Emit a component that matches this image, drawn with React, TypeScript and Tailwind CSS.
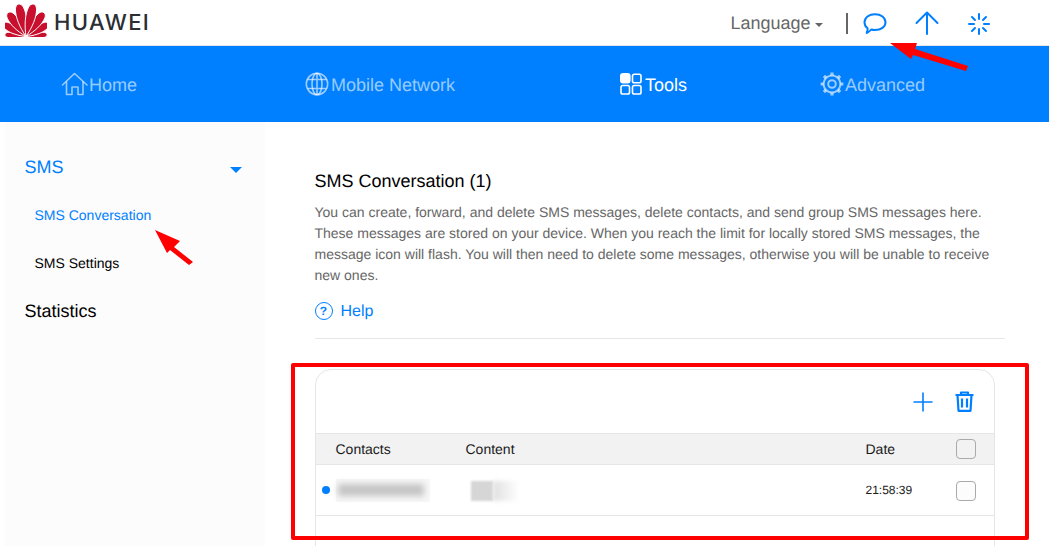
import React from 'react';

const Petal: React.FC<{ angle: number; len: number; width: number }> = ({ angle, len, width }) => (
  <path
    transform={`translate(21 33.5) rotate(${angle})`}
    d={`M0 0 C${-width * 0.7} ${-len * 0.3} ${-width * 1.05} ${-len * 0.62} ${-width * 0.7} ${-len * 0.85} C${-width * 0.45} ${-len} ${width * 0.45} ${-len} ${width * 0.7} ${-len * 0.85} C${width * 1.05} ${-len * 0.62} ${width * 0.7} ${-len * 0.3} 0 0 Z`}
    fill="#c8102e"
    stroke="#ffffff"
    strokeWidth="0.9"
  />
);

const HuaweiLogo = () => (
  <svg width="42" height="34" viewBox="0 0 42 34" className="shrink-0">
    <Petal angle={-85} len={22} width={3.5} />
    <Petal angle={85} len={22} width={3.5} />
    <Petal angle={-61} len={27} width={5} />
    <Petal angle={61} len={27} width={5} />
    <Petal angle={-37} len={31} width={5.5} />
    <Petal angle={37} len={31} width={5.5} />
    <Petal angle={-13} len={34.5} width={5.8} />
    <Petal angle={13} len={34.5} width={5.8} />
  </svg>
);

const HomeIcon = () => (
  <svg width="28" height="24" viewBox="0 0 28 24" fill="none" stroke="currentColor" strokeWidth="1.6" strokeLinejoin="round" strokeLinecap="round">
    <path d="M1.5 13 L13.5 1.5 L26 13" />
    <path d="M5.5 10 V22.5 H11 V15 H17 V22.5 H22 V10" />
  </svg>
);

const GlobeIcon = () => (
  <svg width="24" height="24" viewBox="0 0 24 24" fill="none" stroke="currentColor" strokeWidth="1.6">
    <circle cx="12" cy="12" r="10.7" />
    <ellipse cx="12" cy="12" rx="5" ry="10.7" />
    <path d="M12 1.3 V22.7 M2.4 7.5 H21.6 M2.4 16.5 H21.6" />
  </svg>
);

const ToolsIcon = () => (
  <svg width="22" height="22" viewBox="0 0 22 22" fill="none" stroke="currentColor" strokeWidth="1.6">
    <rect x="0.8" y="0.8" width="9" height="9" rx="2.2" fill="currentColor" />
    <rect x="12.5" y="1.2" width="8.5" height="8.5" rx="1.8" />
    <rect x="1" y="12.5" width="8.5" height="8.5" rx="1.8" />
    <rect x="12.5" y="12.5" width="8.5" height="8.5" rx="1.8" />
  </svg>
);

const GearIcon = () => (
  <svg width="24" height="24" viewBox="0 0 24 24" fill="none" stroke="currentColor" strokeWidth="2">
    <circle cx="12" cy="12" r="8.4" />
    <circle cx="12" cy="12" r="3.8" />
    <path
      strokeWidth="3.2"
      d="M12 0.6 V3.6 M12 20.4 V23.4 M0.6 12 H3.6 M20.4 12 H23.4 M3.9 3.9 L6 6 M18 18 L20.1 20.1 M3.9 20.1 L6 18 M18 6 L20.1 3.9"
    />
  </svg>
);

const NavItem: React.FC<{ label: string; icon: React.ReactNode; active?: boolean; width: string; gap: string }> = ({ label, icon, active, width, gap }) => (
  <div className={`flex items-center ${width} ${active ? 'text-white' : 'text-white/60'}`}>
    {icon}
    <span className={`mt-[2px] text-[18px] ${gap}`}>{label}</span>
  </div>
);

const Check = ({ fill, offset }: { fill: string; offset?: string }) => (
  <div className={`h-5 w-5 rounded-[4px] border border-[#aaaaaa] ${fill} ${offset ?? ''}`} />
);

export default function App() {
  return (
    <div className="relative h-[546px] w-[1049px] overflow-hidden bg-white font-['Liberation_Sans',Arial,sans-serif] [text-rendering:geometricPrecision]">
      {/* top bar */}
      <header className="flex h-[46px] items-start border-b border-[#e6e6e6] bg-white">
        <div className="ml-[5px] mt-[3px] flex items-center">
          <HuaweiLogo />
          <span className="ml-[7px] mt-[5px] w-[97px] overflow-hidden whitespace-nowrap font-['Inter',sans-serif] text-[22px] font-medium leading-[28px] tracking-[1.4px] text-[#2b2e33]">
            HUAWEI
          </span>
        </div>
        <div className="ml-[579.5px] flex h-[46px] items-center text-[#666666]">
          <span className="text-[18px]">Language</span>
          <span className="ml-[4px] mt-[3px] h-0 w-0 border-x-[4px] border-t-[4px] border-x-transparent border-t-[#666666]" />
          <span className="ml-[23.5px] h-[21px] w-[2px] bg-[#666666]" />
          <svg className="ml-[15px] mt-[1px]" width="24" height="22" viewBox="0 0 24 22" fill="none" stroke="#007fff" strokeWidth="2" strokeLinejoin="round">
            <path d="M12 1.2 C18 1.2 22.5 4.6 22.5 9.2 C22.5 13.8 18 17 12 17 C10.5 17 9.5 16.9 8.2 16.5 C7 18 5.5 19.3 3.7 20 C4.4 18.3 4.8 16.7 4.6 15.2 C2.6 13.8 1.5 11.7 1.5 9.2 C1.5 4.6 6 1.2 12 1.2 Z" />
          </svg>
          <svg className="ml-[28px]" width="24" height="24" viewBox="0 0 24 24" fill="none" stroke="#007fff" strokeWidth="2" strokeLinecap="round" strokeLinejoin="round">
            <path d="M1.5 12 L12 1.5 L22.5 12 M12 1.5 V23" />
          </svg>
          <svg className="ml-[29px] mt-[1px]" width="22" height="22" viewBox="0 0 22 22" fill="none" stroke="#007fff" strokeWidth="2" strokeLinecap="round">
            <path d="M11 1 V6 M11 16 V21 M1 11 H6 M16 11 H21 M4 4 L7 7 M15 15 L18 18 M4 18 L7 15 M15 7 L18 4" />
          </svg>
        </div>
      </header>

      {/* main nav */}
      <nav className="flex h-[76px] items-center bg-[#007fff] pl-[61px]">
        <NavItem label="Home" icon={<HomeIcon />} width="w-[244px]" gap="ml-0" />
        <NavItem label="Mobile Network" icon={<GlobeIcon />} width="w-[315px]" gap="ml-[2px]" />
        <NavItem label="Tools" icon={<ToolsIcon />} active width="w-[200px]" gap="ml-[3px]" />
        <NavItem label="Advanced" icon={<GearIcon />} width="w-[150px]" gap="ml-[1px]" />
      </nav>

      <div className="flex h-[424px]">
        {/* sidebar */}
        <aside className="ml-[5px] w-[260px] shrink-0 bg-[#fcfcfc] pt-[21px]">
          <div className="flex h-12 items-center justify-between pl-[19.5px] pr-[23px] text-[18px] text-[#007fff]">
            <span>SMS</span>
            <span className="mt-[5px] h-0 w-0 border-x-[6px] border-t-[6px] border-x-transparent border-t-[#007fff]" />
          </div>
          <div className="flex h-12 items-center pl-[29.5px] text-sm text-[#007fff]">SMS Conversation</div>
          <div className="flex h-12 items-center pl-[29.5px] text-sm text-black">SMS Settings</div>
          <div className="flex h-12 items-center pl-[19.5px] text-[18px] text-black">Statistics</div>
        </aside>

        {/* content */}
        <main className="ml-[49.5px] w-[690px] pt-[48px]">
          <h1 className="text-[18px] leading-[22px] text-black">SMS Conversation (1)</h1>
          <p className="mt-[10px] text-sm leading-[21px] text-[#666666]">
            You can create, forward, and delete SMS messages, delete contacts, and send group SMS messages here.
            <br />
            These messages are stored on your device. When you reach the limit for locally stored SMS messages, the
            <br />
            message icon will flash. You will then need to delete some messages, otherwise you will be unable to receive
            <br />
            new ones.
          </p>
          <div className="mt-[15px] flex h-[21px] items-center text-[#007fff]">
            <span className="mb-[2px] flex h-[18px] w-[18px] items-center justify-center rounded-full border border-[#007fff] text-xs font-bold">?</span>
            <span className="ml-2 text-base">Help</span>
          </div>
          <div className="mt-4 border-t border-[#e6e6e6]" />

          <section className="mt-[30px] h-[200px] w-[680px] rounded-t-[16px] border border-[#e6e6e6] bg-white">
            <div className="flex h-[63px] items-center justify-end pr-[20px]">
              <svg width="20" height="20" viewBox="0 0 20 20" fill="none" stroke="#007fff" strokeWidth="1.6">
                <path d="M10 0.5 V19.5 M0.5 10 H19.5" />
              </svg>
              <svg className="ml-[22px]" width="19" height="21" viewBox="0 0 19 21" fill="none" stroke="#007fff" strokeWidth="2.2" strokeLinejoin="round">
                <path d="M0.5 4 H18.5 M6 4 V1.5 H13 V4" />
                <path d="M2.5 4 L3.5 19.8 H15.5 L16.5 4" />
                <path d="M7 7.5 V16.5 M12 7.5 V16.5" />
              </svg>
            </div>
            <div className="flex h-[32px] items-center border-y border-[#e6e6e6] bg-[#f2f2f2] text-sm text-[#1a1a1a]">
              <span className="ml-5 w-[130px]">Contacts</span>
              <span className="w-[400px]">Content</span>
              <span className="w-[90px]">Date</span>
              <Check fill="bg-[#f2f2f2]" />
            </div>
            <div className="flex h-[51px] items-center border-b border-[#e6e6e6]">
              <span className="ml-[6px] h-2 w-2 rounded-full bg-[#007fff]" />
              <div className="ml-[6px] flex h-[23px] w-[94px] items-center bg-[#f7f7f7]">
                <div className="ml-[2px] h-[12px] w-[86px] bg-[#c4c4c4] blur-[3px]" />
              </div>
              <div className="ml-[41px] mt-[2px] flex w-[50px]">
                <div className="h-5 w-[22px] bg-[#d6d6d6] blur-[1px]" />
                <div className="h-5 w-[26px] bg-linear-to-r from-[#e0e0e0] to-transparent blur-[2px]" />
              </div>
              <span className="ml-[345px] w-[90px] text-xs text-[#1a1a1a]">21:58:39</span>
              <Check fill="bg-[#fcfcfc]" offset="mt-[2px]" />
            </div>
          </section>
        </main>
      </div>

      {/* red annotations drawn over the screenshot */}
      <div className="absolute left-[291px] top-[363px] h-[177px] w-[738px] rounded-[2px] border-4 border-[#ff0000]" />
      <svg className="absolute left-0 top-0" width="1049" height="546" fill="#ff0000" stroke="none">
        <path d="M890 43 L917 43 L915 49 L968 66 L966 71 L913 55 L911 59 Z" />
        <path d="M155 230 L180 241 L174 247 L193 262 L189 265 L170 250 L167 253 Z" />
      </svg>
    </div>
  );
}
